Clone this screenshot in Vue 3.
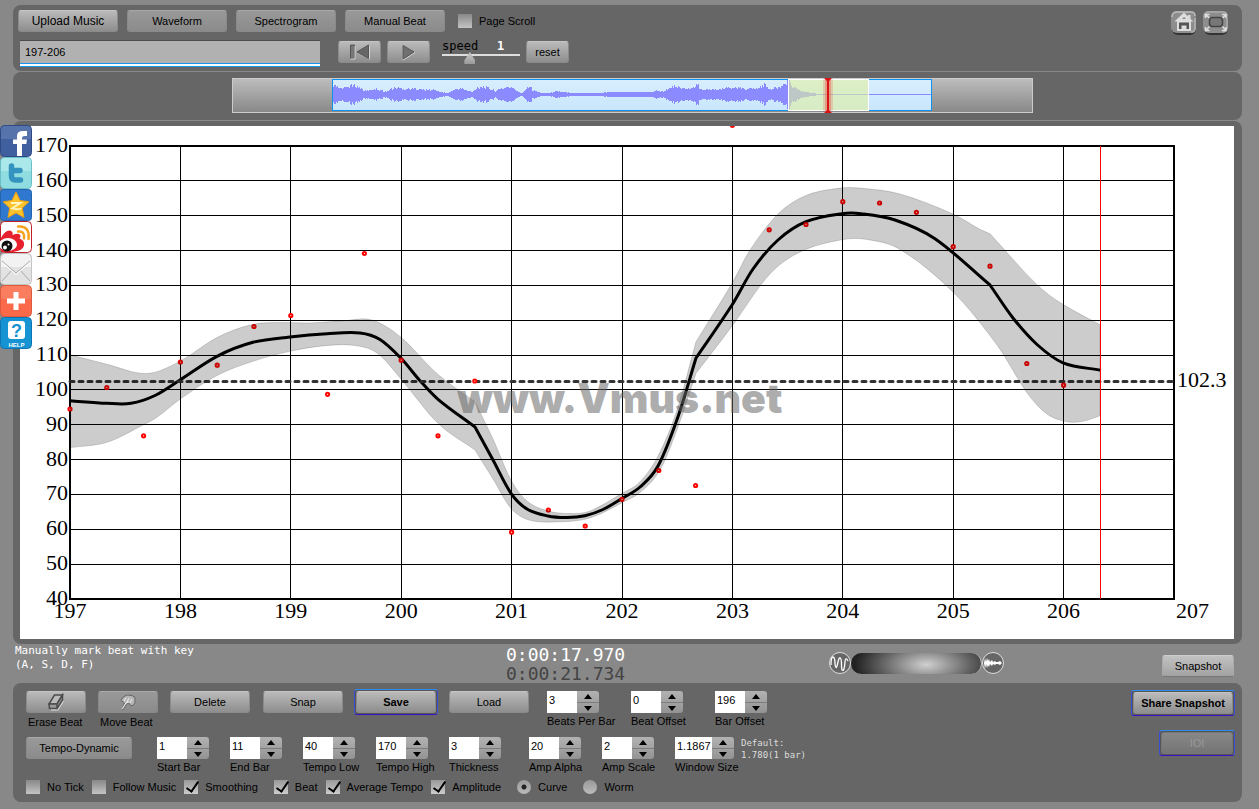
<template>
  <div class="page">
    <header class="panel header">
      <div class="header-main">
        <div class="row tabs">
          <button class="btn big">Upload Music</button>
          <button v-for="t in tabs" :key="t" class="btn dim tab">{{ t }}</button>
          <label class="check page-scroll"><input v-model="pageScroll" type="checkbox" />Page Scroll</label>
        </div>
        <div class="row transport">
          <input v-model="title" class="title" type="text" aria-label="Title" />
          <button class="btn play" aria-label="Back to start">
            <svg width="24" height="18" viewBox="0 0 24 18">
              <path d="M2.500 2h4v13.500h-4z" fill="#777" stroke="#555" />
              <path d="M21.500 3v13L9 9.500M7 3v13h-4.500" fill="none" stroke="#d5d5d5" />
              <path d="M20.500 2v13.500L9 9z" fill="#666" stroke="#555" />
            </svg>
          </button>
          <button class="btn play" aria-label="Play">
            <svg width="24" height="18" viewBox="0 0 24 18">
              <path d="M6 3v14l12-7.500" fill="none" stroke="#d5d5d5" />
              <path d="M6 2.500v13.500L17 9z" fill="#707070" stroke="#555" />
            </svg>
          </button>
          <div class="speed">
            <label for="speed">speed</label><output for="speed">{{ speed }}</output>
            <input id="speed" v-model="speed" type="range" min="0" max="3" step="1" />
          </div>
          <button class="btn reset" @click="speed = 1">reset</button>
        </div>
      </div>
      <div class="header-icons">
        <button class="icon-btn" aria-label="Home">
          <svg width="28" height="26" viewBox="0 0 28 26">
            <rect x="2" y="3" width="24" height="22" rx="6" fill="#333" />
            <rect x="1" y="1" width="25" height="22" rx="6" fill="#8d8d8d" />
            <path d="M2 7q0-5 5-5h14q4 0 4 4" fill="none" stroke="#bbb" stroke-width="1.500" />
            <path d="M25 8v10q0 4-4 4" fill="none" stroke="#aaa" stroke-width="2" />
            <path d="M14 2.500 4.500 11.500h2.500V21h14v-9.500h2.500L20.500 9V5h-2.500v1.500z" fill="#ddd" />
            <path d="M9 19v-6.500h10V19h-2.500v-3.500h-5V19z" fill="#555" />
            <path d="M12 9h4l-2-2z" fill="#888" />
          </svg>
        </button>
        <button class="icon-btn" aria-label="Full screen">
          <svg width="28" height="26" viewBox="0 0 28 26">
            <rect x="2" y="3" width="24" height="22" rx="6" fill="#333" />
            <rect x="1" y="1" width="25" height="22" rx="6" fill="#8d8d8d" />
            <path d="M2 7q0-5 5-5h14q4 0 4 4M25 8v10q0 4-4 4" fill="none" stroke="#aaa" stroke-width="1.500" />
            <rect x="7.500" y="7.500" width="13" height="9" rx="3" fill="#777" stroke="#444" stroke-width="1.500" />
            <path d="M3.500 8V4.500h4M3.500 4.500l4 3.500M20 4.500h4V8M24 4.500 20.500 8M3.500 17v3.500h4M3.500 20.500l4-4M20 20.500h4V17M24 20.500l-3.500-4" fill="none" stroke="#ddd" stroke-width="1.500" />
          </svg>
        </button>
      </div>
    </header>

    <section class="panel overview">
      <svg width="801" height="35" viewBox="0 0 801 35">
        <defs>
          <linearGradient id="idle" x2="0" y2="1"><stop offset="0" stop-color="#bdbdbd" /><stop offset="1" stop-color="#888" /></linearGradient>
          <linearGradient id="audio" x2="0" y2="1"><stop offset="0" stop-color="#d8eefd" /><stop offset="1" stop-color="#c8e6fd" /></linearGradient>
        </defs>
        <rect x=".5" y=".5" width="800" height="34" fill="url(#idle)" stroke="#ccc" />
        <rect x="100.500" y="1.500" width="599" height="31" fill="url(#audio)" stroke="#0f93ee" />
        <path :d="wavePath" stroke="#8b8bff" fill="none" shape-rendering="crispEdges" />
        <rect x="556.500" y="1.500" width="80" height="31" fill="#e0f0a0" fill-opacity=".6" stroke="#fff" />
        <rect x="591" y="1" width="10" height="32" fill="#e33" opacity=".18" />
        <rect x="593" y="1" width="6" height="32" fill="#e33" opacity=".3" />
        <path d="M592 0h8l-3 3v29l3 3h-8l3-3V3z" fill="#d81414" />
      </svg>
    </section>

    <main class="panel chart-panel">
      <svg class="chart" viewBox="20 126 1214 513" role="img" aria-label="Tempo curve">
        <g stroke="#000" shape-rendering="crispEdges">
          <line v-for="b in innerBars" :key="'v' + b" :x1="gridX(b)" :x2="gridX(b)" y1="146" y2="599" />
          <line v-for="t in innerTempi" :key="'h' + t" x1="70" x2="1174" :y1="gridY(t)" :y2="gridY(t)" />
          <rect x="70" y="146" width="1104" height="453" fill="none" stroke-width="2" />
        </g>
        <g class="axis">
          <text v-for="t in tempi" :key="t" x="68" :y="yOf(t) + 6" text-anchor="end">{{ t }}</text>
          <text v-for="b in bars" :key="b" :x="xOf(b)" y="618" text-anchor="middle">{{ b }}</text>
          <text x="1176" y="618">207</text>
          <text x="1177" y="387">102.3</text>
        </g>
        <path :d="smooth(tempo)" fill="none" stroke="#000" stroke-width="3" />
        <line x1="70" x2="1176" y1="381.500" y2="381.500" stroke="#333" stroke-width="3" stroke-linecap="round" stroke-dasharray="4 5" />
        <g fill="#fff" stroke="#f00" stroke-width="2">
          <circle v-for="(y, i) in beats" :key="i" :cx="70 + i * 36.8" :cy="y" r="1.600" />
        </g>
        <path :d="band" fill="#000" fill-opacity=".2" stroke="#000" stroke-opacity=".15" />
        <line x1="1100.500" x2="1100.500" y1="146" y2="599" stroke="#f00" shape-rendering="crispEdges" />
        <text class="watermark" x="457" y="413">www.Vmus.net</text>
      </svg>
    </main>

    <section class="status">
      <p class="hint">Manually mark beat with key<br />(A, S, D, F)</p>
      <div class="clock"><div>0:00:17.970</div><div class="total">0:00:21.734</div></div>
      <div class="mix">
        <svg width="22" height="24" viewBox="0 0 22 24">
          <circle cx="11" cy="12" r="10.500" fill="#666" stroke="#ddd" />
          <path d="M2 14q0-8 2-8t2 7q1 7 2.500 0T11 7q1.500 0 1.500 7t2 5q1-2 1.500-8t3-1" fill="none" stroke="#fff" stroke-width="1.300" />
        </svg>
        <input v-model="mix" type="range" min="0" max="100" aria-label="Balance" />
        <svg width="22" height="24" viewBox="0 0 22 24">
          <circle cx="11" cy="12" r="10.500" fill="#666" stroke="#ddd" />
          <path d="M2 12l1-5 1 4 1-4 1 3 1-2 1 3 2-2 1 2 2-1 1 1h2l2-1 2 2-2 2-2-1h-2l-1 1-2-1-1 2-2-2-1 3-1-2-1 3-1-4-1 5z" fill="#fff" />
        </svg>
      </div>
      <button class="btn light snapshot">Snapshot</button>
    </section>

    <footer class="panel controls">
      <div class="controls-main">
        <div class="row edit">
          <div class="tool">
            <button id="erase" class="btn" aria-label="Erase Beat">
              <svg width="18" height="18" viewBox="0 0 18 18">
                <path d="M7.500 2h8L10 11H2z" fill="#bbb" stroke="#4c4c4c" stroke-width="1.500" />
                <path d="M2 11h8v4.500H2.500zM10 11l5.500-9v5L10 15.500z" fill="#999" stroke="#4c4c4c" stroke-width="1.500" />
                <path d="M4 17h7l5.500-9" fill="none" stroke="#ddd" />
              </svg>
            </button>
            <span>Erase Beat</span>
          </div>
          <div class="tool">
            <button id="move" class="btn dim" aria-label="Move Beat">
              <svg width="18" height="18" viewBox="0 0 18 18">
                <path d="M3 16 5.500 10 2 7.500 4 4l4-2 5 .5 3 2V10l-3 3-2-1-1-2-2.500 1L4.500 16.500z" fill="#b5b5b5" stroke="#666" />
                <path d="M5 8l2-3M8 9l2-4M11 10l2-4M3 16l4-6 3-1" fill="none" stroke="#eee" />
              </svg>
            </button>
            <span>Move Beat</span>
          </div>
          <button class="btn action">Delete</button>
          <button class="btn action">Snap</button>
          <button class="btn action strong">Save</button>
          <button class="btn action">Load</button>
          <div class="fields">
            <div v-for="f in barFields" :key="f.id" class="field">
              <div class="stepper">
                <input :id="f.id" v-model="f.value" type="text" />
                <div class="arrows">
                  <button :aria-label="f.label + ' up'" @click="step(f, 1)"></button>
                  <button class="down" :aria-label="f.label + ' down'" @click="step(f, -1)"></button>
                </div>
              </div>
              <label :for="f.id">{{ f.label }}</label>
            </div>
          </div>
        </div>

        <div class="row view">
          <button class="btn dim tempo-dynamic">Tempo-Dynamic</button>
          <div class="fields">
            <div v-for="f in viewFields" :key="f.id" class="field" :class="f.size">
              <div class="stepper">
                <input :id="f.id" v-model="f.value" type="text" />
                <div class="arrows">
                  <button :aria-label="f.label + ' up'" @click="step(f, 1)"></button>
                  <button class="down" :aria-label="f.label + ' down'" @click="step(f, -1)"></button>
                </div>
              </div>
              <label :for="f.id">{{ f.label }}</label>
            </div>
          </div>
          <p class="default">Default:<br />1.780(1 bar)</p>
        </div>

        <div class="row options">
          <label v-for="o in options" :key="o.label" class="check" :class="{ spaced: o.spaced }">
            <input v-model="o.on" type="checkbox" />{{ o.label }}
          </label>
          <label class="check spaced"><input v-model="mode" type="radio" name="mode" value="curve" />Curve</label>
          <label class="check"><input v-model="mode" type="radio" name="mode" value="worm" />Worm</label>
        </div>
      </div>
      <div class="share">
        <button class="btn strong share-snapshot">Share Snapshot</button>
        <button class="btn strong ioi" disabled>IOI</button>
      </div>
    </footer>

    <nav class="social">
      <a href="#" aria-label="Facebook">
        <svg viewBox="0 0 32 32">
          <rect x=".5" y=".5" width="31" height="31" rx="4" fill="#3f5f9f" stroke="#2f4a85" />
          <path d="M1 5q0-4 4-4h22q4 0 4 4v9H1z" fill="#6580b5" opacity=".6" />
          <path d="M17 31V19h-4v-4.500h4v-3.500q0-5 6-5h4v5h-2.500q-2.500 0-2.500 2v1.500h5l-.7 4.500H22v12z" fill="#fff" />
        </svg>
      </a>
      <a href="#" aria-label="Twitter">
        <svg viewBox="0 0 32 32">
          <rect x=".5" y=".5" width="31" height="31" rx="4" fill="#8fdde0" stroke="#68bfc8" />
          <path d="M1 5q0-4 4-4h22q4 0 4 4v9H1z" fill="#b5ecec" opacity=".7" />
          <path d="M11.500 9v10q0 4 4 4h5M11.500 13.500h8.500" fill="none" stroke="#3594bf" stroke-width="5.500" stroke-linecap="round" />
        </svg>
      </a>
      <a href="#" aria-label="Qzone">
        <svg viewBox="0 0 32 32">
          <rect x=".5" y=".5" width="31" height="31" rx="3" fill="#2e78cf" stroke="#2563ad" />
          <path d="M16 3l4 8.500 9 1.200-6.700 6.300 1.700 9.500-8-4.500-8 4.500 1.700-9.500L3 12.700l9-1.200z" fill="#fdc32c" stroke="#e89c14" />
          <path d="M11 14h9.500L12 19.500q5 1.500 9.500 0" fill="none" stroke="#fff6c0" stroke-width="1.800" />
        </svg>
      </a>
      <a href="#" aria-label="Weibo">
        <svg viewBox="0 0 32 32">
          <rect x=".5" y=".5" width="31" height="31" rx="4" fill="#fff" stroke="#c0202a" />
          <path d="M1 17q4-8 9-7.500 3.500 1 2.500 4.500 8-3 8 1.500l-1 2q5.500 2 4.500 7t-11 6.500H1z" fill="#e6212d" />
          <ellipse cx="8" cy="23.500" rx="9" ry="6.500" fill="#fff" />
          <circle cx="7" cy="25" r="5.500" fill="#111" />
          <circle cx="5" cy="26.500" r="2" fill="#fff" />
          <circle cx="8.500" cy="23.500" r="1" fill="#fff" />
          <path d="M18 10.500q7-1 6 7M18 5.500q12-1 10.500 12.500" fill="none" stroke="#f5a31c" stroke-width="2.500" stroke-linecap="round" />
        </svg>
      </a>
      <a href="#" aria-label="Mail">
        <svg viewBox="0 0 32 32">
          <rect x=".5" y=".5" width="31" height="31" rx="4" fill="#e2e2e2" stroke="#c4c4c4" />
          <path d="M1 8q0-7 5-7h20q5 0 5 7v6H1z" fill="#f2f2f2" />
          <path d="M2 8l14 12L30 8M2 28l10-11M30 28 20 17" fill="none" stroke="#aaa" />
          <path d="M2 9.500l14 12 14-12" fill="none" stroke="#fff" />
        </svg>
      </a>
      <a href="#" aria-label="More">
        <svg viewBox="0 0 32 32">
          <rect x=".5" y=".5" width="31" height="31" rx="4" fill="#f9694a" stroke="#df5a3c" />
          <path d="M1 5q0-4 4-4h22q4 0 4 4v9H1z" fill="#fb8a6e" opacity=".6" />
          <path d="M16 7v18M7 16h18" stroke="#fff" stroke-width="5" />
        </svg>
      </a>
      <a href="#" aria-label="Help">
        <svg viewBox="0 0 32 32">
          <rect x=".5" y=".5" width="31" height="31" rx="4" fill="#1593d2" stroke="#0c75b5" />
          <rect x="8" y="4" width="17" height="18" rx="3" fill="#fff" />
          <text x="16.500" y="19.500" text-anchor="middle" font-size="18" fill="#1593d2">?</text>
          <text x="16.500" y="29.500" text-anchor="middle" font-size="6" fill="#fff">HELP</text>
        </svg>
      </a>
    </nav>
  </div>
</template>

<script setup>
import { ref, computed } from 'vue';

const tabs = ['Waveform', 'Spectrogram', 'Manual Beat'];
const title = ref('197-206');
const pageScroll = ref(false);
const speed = ref(1);
const mix = ref(58);
const mode = ref('curve');

const barFields = ref([
  { id: 'beats-per-bar', label: 'Beats Per Bar', value: '3' },
  { id: 'beat-offset', label: 'Beat Offset', value: '0' },
  { id: 'bar-offset', label: 'Bar Offset', value: '196' },
]);
const viewFields = ref([
  { id: 'start-bar', label: 'Start Bar', value: '1' },
  { id: 'end-bar', label: 'End Bar', value: '11' },
  { id: 'tempo-low', label: 'Tempo Low', value: '40' },
  { id: 'tempo-high', label: 'Tempo High', value: '170' },
  { id: 'thickness', label: 'Thickness', value: '3', size: 'wide' },
  { id: 'amp-alpha', label: 'Amp Alpha', value: '20' },
  { id: 'amp-scale', label: 'Amp Scale', value: '2' },
  { id: 'window-size', label: 'Window Size', value: '1.1867', size: 'long' },
]);
const options = ref([
  { label: 'No Tick', on: false },
  { label: 'Follow Music', on: false },
  { label: 'Smoothing', on: true, spaced: true },
  { label: 'Beat', on: true },
  { label: 'Average Tempo', on: true },
  { label: 'Amplitude', on: true, spaced: true },
]);

function step(field, by) { field.value = String(Number(field.value) + by); }

// chart axes
const bars = Array.from({ length: 10 }, (_, i) => 197 + i);
const tempi = Array.from({ length: 14 }, (_, i) => 170 - i * 10);
const innerBars = bars.slice(1);
const innerTempi = tempi.slice(1, -1);
const xOf = (bar) => 70 + (bar - 197) * 110.4;
const yOf = (t) => 146 + (170 - t) * 453 / 130;
const gridX = (bar) => Math.floor(xOf(bar)) + 0.5;
const gridY = (t) => Math.floor(yOf(t)) + 0.5;

// one dot per beat, three beats per bar
const beats = [
  409, 387.5, 435.8, 362, 365.2, 326.5, 315.5, 394.3, 253.5, 360.2, 435.8, 381, 532.2, 510, 526,
  499.3, 470.5, 485.5, 125.5, 229.8, 224.5, 201.7, 203, 212.3, 246.7, 266.2, 363.5, 385.2,
];
const tempo = [
  [70, 400.7], [107, 403.3], [131, 403.3], [155, 395.5], [180, 380], [217, 356.3], [253, 342.3],
  [290, 337], [327, 333.7], [360, 332.9], [380, 339.5], [401, 358.3],
  [420, 380.7], [438, 399.3], [475, 427], [493, 460], [511, 493.3], [527, 509],
  [548, 516], [567, 517.5], [585, 515.7], [603, 509.5], [622, 498.5], [640, 487], [658, 466],
  [678, 416.7], [696, 358], [732, 305], [753, 269], [778, 240],
  [806, 221.7], [842, 213.7], [861, 213.7], [895, 220], [935, 238.7],
  [990, 285], [1013, 318], [1037, 344.5], [1063, 362.8], [1101, 370.3],
];
const upper = [
  [70, 354.7], [107, 364.3], [147, 373.5], [180, 361.2],
  [217, 337.5], [252, 324.5], [280, 322.5], [310, 323], [343, 320.8], [372, 320],
  [401, 337.3], [438, 374.5], [475, 401.7], [493, 439], [511, 480],
  [527, 501], [548, 511], [570, 513.5], [590, 511], [622, 493.3], [640, 481.7],
  [658, 456], [677, 410], [696, 341.7], [732, 283.3], [750, 250],
  [778, 214], [806, 195.5], [840, 188.1], [860, 188.1],
  [900, 194], [953, 214], [980, 229.3], [990, 233.7], [1037, 284.7], [1063, 304.3], [1100, 324.7],
];
const lower = [
  [70, 447.7], [107, 442.3], [143, 425], [157, 417.3], [180, 399.3], [217, 375.5],
  [253, 361.3], [290, 351.3], [323, 345.9], [353, 345.3], [377, 353], [401, 379],
  [438, 423.3], [475, 450], [493, 479], [511, 508.3], [530, 520.3], [563, 521.7],
  [585, 519.3], [603, 512.7], [622, 502.7], [640, 492.5], [660, 470], [678, 427], [696, 373.3],
  [732, 326.2], [769, 275], [800, 252], [842, 239.7], [867, 239.5],
  [900, 249.5], [953, 292], [997, 345], [1027, 392.7], [1047, 414], [1067, 421.7], [1083, 421.3], [1100, 415.7],
];
// places where the curve turns sharply
const corners = [475, 696, 990];

// cubic through the points, tangent taken from the neighbours
function smooth(pts, start = 'M') {
  const slope = (i, side) => {
    const corner = corners.includes(pts[i][0]);
    const a = pts[corner && side > 0 ? i : Math.max(i - 1, 0)];
    const b = pts[corner && side < 0 ? i : Math.min(i + 1, pts.length - 1)];
    return (b[1] - a[1]) / (b[0] - a[0]);
  };
  let d = start + pts[0].join(' ');
  for (let i = 1; i < pts.length; i++) {
    const [x0, y0] = pts[i - 1];
    const [x1, y1] = pts[i];
    const h = (x1 - x0) / 3;
    d += `C${x0 + h} ${y0 + h * slope(i - 1, 1)} ${x1 - h} ${y1 - h * slope(i, -1)} ${x1} ${y1}`;
  }
  return d;
}
const band = computed(() => smooth(upper) + smooth([...lower].reverse(), 'L') + 'Z');

// waveform envelope: [x, half height]
const envelope = [
  [101, 8], [105, 7], [109, 5], [113, 6], [118, 8], [123, 8], [128, 6], [132, 3], [136, 3], [142, 5], [148, 4],
  [154, 2], [159, 5], [165, 6], [172, 5], [186, 5], [194, 4], [202, 4], [208, 2], [214, 1], [218, 2], [224, 5],
  [230, 5], [236, 3], [240, 2], [245, 6], [251, 7], [258, 5], [263, 3], [268, 5], [275, 7], [282, 5], [286, 2],
  [290, 1], [294, 5], [297, 9], [300, 4], [305, 2], [311, 1], [318, 1], [324, 3], [328, 2], [348, 1], [368, 1],
  [378, 2], [418, 2], [424, 3], [432, 3], [438, 6], [443, 8], [448, 6], [458, 5], [463, 6], [465, 10], [468, 5],
  [478, 4], [488, 5], [500, 6], [514, 5], [525, 5], [532, 9], [536, 5], [546, 6], [552, 8], [555, 13], [557, 13],
  [560, 7], [566, 4], [572, 2], [580, 1], [588, 0], [699, 0],
];
const wavePath = computed(() => {
  let d = '';
  let k = 0;
  for (let x = 101; x < 699; x++) {
    while (envelope[k + 1][0] < x) k++;
    const [x0, a0] = envelope[k];
    const [x1, a1] = envelope[k + 1];
    const base = a0 + (a1 - a0) * (x - x0) / (x1 - x0);
    const noise = Math.abs(Math.sin(x * 12.9898) * 43758.5453) % 1;
    const a = Math.round(base * (0.8 + 0.45 * noise));
    d += `M${x + 0.5} ${16 - a}V${17 + a}`;
  }
  return d;
});
</script>

<style>
body { margin: 0; background: #888; }
</style>

<style scoped>
.page { position: relative; padding: 5px 17px 7px 13px; font: 11px/14px "Liberation Sans", Arial, sans-serif; color: #000; background: #888; }
.page * { box-sizing: border-box; }
.panel { background: #666; border-radius: 8px; }
.row { display: flex; align-items: flex-start; }
p { margin: 0; }
button, input { font: inherit; color: inherit; }

.btn { display: flex; align-items: center; justify-content: center; height: 22px; padding: 0; border: 1px solid #8a8a8a; border-top-color: #c4c4c4; border-radius: 3px; background: linear-gradient(#bababa, #8e8e8e); cursor: pointer; }
.btn.dim { background: linear-gradient(#999, #8b8b8b); border-top-color: #a8a8a8; }
.btn.light { background: linear-gradient(#c2c2c2, #a2a2a2); border-color: #aaa; border-top-color: #ccc; border-bottom-color: #777; }
.btn.strong { position: relative; font-weight: bold; box-shadow: 0 0 0 1px #555; }
.btn.strong::before { content: ""; position: absolute; inset: -3px; border: 1px solid; border-color: #2e8cf0 #3a4fd8 #3a12c8; border-radius: 3px; }
.btn.big { width: 100px; font-size: 12px; }
.btn.tab { width: 100px; }

.header { display: flex; justify-content: space-between; height: 66px; margin-bottom: 1px; padding: 5px 12px 0 5px; }
.tabs { gap: 9px; margin-bottom: 8px; }
.check { display: flex; align-items: center; gap: 7px; height: 22px; white-space: nowrap; }
.page-scroll { margin-left: 4px; }
.check input { appearance: none; width: 14px; height: 14px; margin: 0; background: linear-gradient(#888, #c4c4c4); }
.check input[type="radio"] { border-radius: 50%; background: linear-gradient(#999, #bbb); }
.check input[type="radio"]:checked { background: radial-gradient(circle, #222 0 2px, transparent 3px), linear-gradient(#999, #bbb); }
.check input[type="checkbox"]:checked { position: relative; background: linear-gradient(#999, #ccc); }
.check input[type="checkbox"]:checked::after { content: ""; position: absolute; left: 5px; top: -1px; width: 5px; height: 11px; border: solid #000; border-width: 0 2px 2px 0; transform: rotate(35deg); }

.transport { padding-left: 2px; }
.title { width: 300px; height: 27px; padding: 0 5px 5px; border: 0; border-top: 1px solid #4c4c4c; background: linear-gradient(#1896ee, #1896ee) 0 100% / 100% 1px no-repeat, linear-gradient(#fff, #fff) 0 calc(100% - 1px) / 100% 2px no-repeat, linear-gradient(#1896ee, #1896ee) 0 calc(100% - 3px) / 100% 1px no-repeat, #b1b1b1; }
.play { width: 43px; margin: 1px 6px 0 0; }
.title + .play { margin-left: 18px; }
.speed { display: grid; grid-template-columns: 55px 23px; width: 78px; margin-left: 6px; font: 12px/12px "DejaVu Sans Mono", monospace; }
.speed output { color: #fff; font-weight: bold; }
.speed input { grid-column: 1 / 3; appearance: none; width: 78px; height: 12px; margin: 0; background: linear-gradient(#ddd, #ddd) 0 2px / 100% 2px no-repeat; }
.speed input::-webkit-slider-thumb { appearance: none; width: 11px; height: 12px; background: linear-gradient(#ccc, #999); clip-path: polygon(50% 0, 100% 70%, 100% 100%, 0 100%, 0 70%); }
.reset { width: 43px; margin: 1px 0 0 6px; }
.header-icons { display: flex; gap: 4px; }
.icon-btn { width: 28px; height: 26px; padding: 0; border: 0; background: none; cursor: pointer; }

.overview { display: flex; justify-content: center; height: 48px; margin-bottom: 1px; padding: 6px 0 0 10px; }
.chart-panel { padding: 5px 8px 5px 7px; }
.chart { display: block; width: 100%; background: #fff; }
.axis { font: 22px "Liberation Serif", "Times New Roman", serif; }
.watermark { font: 900 41px Inter, "Liberation Sans", sans-serif; fill: #666; fill-opacity: .55; }

.status { display: flex; height: 39px; padding: 0 8px 0 2px; }
.hint { width: 491px; color: #fff; font: 11px/14px "DejaVu Sans Mono", monospace; }
.clock { width: 323px; color: #fff; font: 18px/19px "DejaVu Sans Mono", monospace; padding-top: 1px; }
.total { color: #444; }
.mix { display: flex; align-items: center; height: 38px; }
.mix input { appearance: none; width: 131px; height: 21px; margin: 0; border-radius: 11px; border-right: 1px solid #bbb; background: radial-gradient(ellipse 55% 150% at 58% 55%, #d0d0d0, #666 60%, #222); }
.mix input::-webkit-slider-thumb { appearance: none; width: 10px; height: 20px; background: transparent; }
.snapshot { width: 72px; margin: 11px 0 0 auto; }

.controls { display: flex; justify-content: space-between; height: 119px; padding: 8px 6px 0 13px; }
.edit { height: 46px; }
.tool { display: flex; flex-direction: column; gap: 2px; width: 60px; margin-right: 12px; white-space: nowrap; }
.tool span { padding-left: 2px; }
.action { width: 80px; margin-right: 13px; }
.fields { display: flex; }
.edit .fields { margin-left: 5px; }
.field { width: 73px; white-space: nowrap; }
.edit .field { width: 84px; }
.field.wide { width: 80px; }
.field.long { width: 59px; }
.stepper { display: flex; height: 22px; margin-bottom: 1px; }
.stepper input { width: 30px; height: 22px; padding: 0 0 4px 2px; border: 0; background: #fff; }
.long .stepper input { width: 37px; }
.arrows { display: flex; flex-direction: column; width: 22px; border-radius: 0 3px 3px 0; background: linear-gradient(#b2b2b2, #939393); }
.arrows button { display: flex; align-items: center; justify-content: center; height: 11px; padding: 0; border: 0; background: none; }
.arrows .down { border-top: 1px solid #7c7c7c; }
.arrows button::before { content: ""; border: solid transparent; border-width: 0 4px 5px; border-bottom-color: #000; }
.arrows .down::before { border-width: 5px 4px 0; border-top-color: #000; }
.tempo-dynamic { width: 106px; margin-right: 25px; }
.view { height: 40px; }
.default { margin-left: 7px; color: #ddd; font: 9px/12px "DejaVu Sans Mono", monospace; }
.options { gap: 8px; }
.options .check { height: 20px; }
.options .spaced { margin-right: 8px; }
.share { display: flex; flex-direction: column; align-items: flex-end; gap: 18px; padding: 1px 3px 0 0; }
.share-snapshot { width: 100px; }
.ioi { width: 72px; color: #999; font-weight: normal; background: linear-gradient(#888, #747474); border-color: #777; }
.btn.strong.ioi { color: #999; font-weight: normal; }

.social { position: absolute; left: 0; top: 125px; width: 32px; }
.social a, .social svg { display: block; width: 32px; height: 32px; }
.social text { font-family: "Liberation Sans", Arial, sans-serif; font-weight: bold; }
</style>
